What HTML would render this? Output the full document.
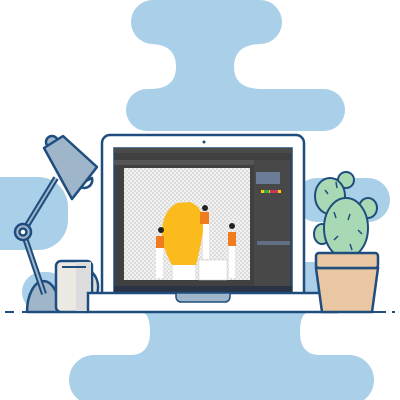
<!DOCTYPE html>
<html><head><meta charset="utf-8"><style>
html,body{margin:0;padding:0;background:#fff;width:400px;height:400px;overflow:hidden}
svg{display:block}
</style></head><body>
<svg width="400" height="400" viewBox="0 0 400 400" xmlns="http://www.w3.org/2000/svg">
<defs>
<pattern id="chk" width="4" height="4" patternUnits="userSpaceOnUse">
<rect width="4" height="4" fill="#f2f2f2"/><rect width="2" height="2" fill="#dcdcdc"/><rect x="2" y="2" width="2" height="2" fill="#dcdcdc"/>
</pattern>
</defs>
<g fill="#a9cfe9">
<rect x="131" y="0" width="151" height="44" rx="22"/>
<rect x="126" y="89" width="219" height="42" rx="21"/>
<path d="M150 44 H262 Q234 44 234 67 Q234 89 262 89 H150 Q176 89 176 67 Q176 44 150 44Z"/>
<rect x="69" y="355" width="305" height="50" rx="25"/>
<path d="M140 312 H310 Q300 312 300 332 Q300 355 320 355 H130 Q150 355 150 332 Q150 312 140 312Z"/>
<rect x="-40" y="177" width="108" height="73" rx="30"/>
<rect x="22" y="272" width="45" height="40" rx="20"/>
<rect x="295" y="178" width="95" height="44" rx="22"/>
<rect x="300" y="262" width="40" height="40"/>
</g>
<!-- lamp -->
<g stroke="#1e4d7e" stroke-width="2.5" stroke-linejoin="round">
<path d="M27 312 A16 30 0 0 1 60 312Z" fill="#9fb6ca"/>
<line x1="23" y1="232" x2="44" y2="294" stroke-width="6"/>
<line x1="23" y1="232" x2="44" y2="294" stroke-width="2" stroke="#a0b6cb"/>
<line x1="23" y1="232" x2="56" y2="178" stroke-width="6"/>
<line x1="23" y1="232" x2="56" y2="178" stroke-width="2" stroke="#a0b6cb"/>
<circle cx="23" cy="232" r="8" fill="#a0b6cb"/>
<circle cx="23" cy="232" r="3.5" fill="#fff"/>
<path d="M78 185 A8 8 0 0 0 92 178Z" fill="#fff"/>
<circle cx="52" cy="142" r="6" fill="#9fb6ca"/>
<path d="M44 148 L63 136 L97 167 L72 199Z" fill="#9fb6ca"/>
</g>
<!-- mug -->
<g stroke="#1e4d7e" stroke-width="2.5">
<path d="M89 274 a14 16 0 0 1 0 26" fill="none" stroke-width="9"/>
<path d="M89 274 a14 16 0 0 1 0 26" fill="none" stroke="#dcdcdc" stroke-width="4"/>
<rect x="56" y="261" width="36" height="51" rx="5" fill="#ece9e2"/>
<rect x="76" y="262" width="15" height="49" fill="#dcdcdc" stroke="none"/>
<line x1="62" y1="267" x2="86" y2="267" stroke-width="2"/>
</g>
<!-- laptop -->
<rect x="102" y="135" width="202" height="170" rx="8" fill="#fff" stroke="#1e4d7e" stroke-width="2.5"/>
<circle cx="204" cy="142" r="1.5" fill="#1e4d7e"/>
<rect x="114" y="148" width="178" height="145" fill="#404040" stroke="#1e4d7e" stroke-width="1.5"/>
<rect x="114" y="148" width="178" height="5" fill="#4a4a4a"/>
<rect x="114" y="160" width="140" height="5" fill="#555"/>
<rect x="254" y="160" width="36" height="128" fill="#484848"/>
<rect x="256" y="172" width="24" height="12" fill="#6a7c96"/>
<rect x="261" y="190" width="20" height="3" fill="#ffcc00"/><rect x="270" y="190" width="8" height="3" fill="#cc3355"/><rect x="264" y="190" width="5" height="3" fill="#33aa55"/>
<rect x="257" y="241" width="33" height="4" fill="#606f86"/>
<rect x="124" y="168" width="126" height="112" fill="url(#chk)"/>
<rect x="114" y="286" width="178" height="7" fill="#2a3444"/>
<!-- bulb -->
<path d="M177 203 Q160 212 162 240 Q166 255 172 265 L196 265 Q200 250 203 232 Q206 208 190 202Z" fill="#fbbb1d"/>
<rect x="173" y="265" width="22" height="15" fill="#fff"/>
<rect x="199" y="260" width="28" height="20" fill="#fff" stroke="#ccc" stroke-width="0.5"/>
<g>
<rect x="200" y="212" width="9" height="12" fill="#f07c1e"/><circle cx="205" cy="208" r="3" fill="#222"/>
<rect x="203" y="224" width="6" height="35" fill="#fff"/>
<rect x="228" y="232" width="8" height="14" fill="#f07c1e"/><circle cx="232" cy="226" r="3" fill="#222"/>
<rect x="229" y="246" width="6" height="32" fill="#fff"/>
<rect x="156" y="236" width="8" height="12" fill="#f07c1e"/><circle cx="161" cy="230" r="3" fill="#222"/>
<rect x="156" y="248" width="7" height="30" fill="#fff"/>
</g>
<!-- base -->
<path d="M88 293 H338 a6 6 0 0 1 6 6 v6 a7 7 0 0 1 -7 7 H88Z" fill="#fff" stroke="#1e4d7e" stroke-width="2.5"/>
<path d="M176 293 H230 v4 a5 5 0 0 1 -5 5 H181 a5 5 0 0 1 -5 -5Z" fill="#9fb6ca" stroke="#1e4d7e" stroke-width="1.5"/>
<!-- cactus -->
<g stroke="#1e4d7e" stroke-width="2" fill="#a9d9b4">
<circle cx="346" cy="180" r="8"/>
<ellipse cx="330" cy="196" rx="15" ry="18"/>
<ellipse cx="368" cy="208" rx="9" ry="10"/>
<ellipse cx="322" cy="234" rx="8" ry="10"/>
<ellipse cx="346" cy="228" rx="22" ry="30"/>
</g>
<g stroke="#1e4d7e" stroke-width="1.5">
<line x1="334" y1="212" x2="336" y2="218"/><line x1="350" y1="214" x2="348" y2="220"/><line x1="358" y1="230" x2="362" y2="234"/><line x1="338" y1="236" x2="334" y2="240"/><line x1="350" y1="244" x2="352" y2="250"/><line x1="325" y1="190" x2="328" y2="194"/><line x1="336" y1="182" x2="337" y2="188"/>
</g>
<path d="M316 268 H378 L372 312 H322Z" fill="#e8c7a2" stroke="#1e4d7e" stroke-width="2.5"/>
<rect x="316" y="253" width="62" height="15" rx="3" fill="#e8c7a2" stroke="#1e4d7e" stroke-width="2.5"/>
<line x1="5" y1="312" x2="395" y2="312" stroke="#1e4d7e" stroke-width="2"/>
<rect x="14" y="311" width="8" height="2" fill="#fff"/>
<rect x="386" y="311" width="6" height="2" fill="#fff"/>
</svg>
</body></html>
